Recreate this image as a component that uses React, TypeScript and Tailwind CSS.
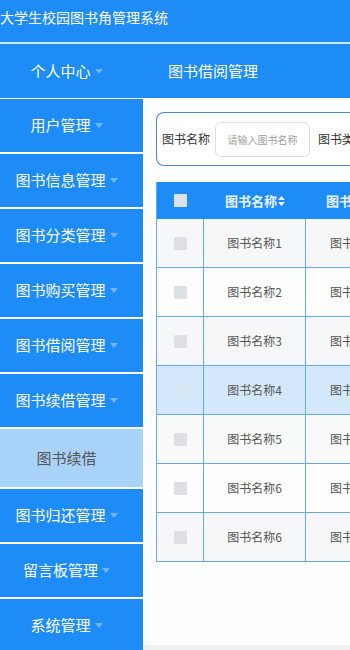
import React from 'react'

const font = { fontFamily: '"Noto Sans CJK SC", "Noto Sans", sans-serif' }

const Caret: React.FC<{ className?: string }> = ({ className }) => (
  <svg width="8" height="5" viewBox="0 0 8 5" className={className}>
    <path d="M0 0 L8 0 L4 5 Z" fill="currentColor" />
  </svg>
)

const menu = [
  '用户管理',
  '图书信息管理',
  '图书分类管理',
  '图书购买管理',
  '图书借阅管理',
  '图书续借管理',
]
const menu2 = ['图书归还管理', '留言板管理', '系统管理']

const rows = [
  { name: '图书名称1', bg: 'bg-[#f6f7f8]' },
  { name: '图书名称2', bg: 'bg-[#fdfdfd]' },
  { name: '图书名称3', bg: 'bg-[#f6f7f8]' },
  { name: '图书名称4', bg: 'bg-[#d3e8fb]', active: true },
  { name: '图书名称5', bg: 'bg-[#f8f9f9]' },
  { name: '图书名称6', bg: 'bg-[#fdfdfd]' },
  { name: '图书名称6', bg: 'bg-[#f6f7f8]' },
]

const MenuItem: React.FC<{ label: string }> = ({ label }) => (
  <div className="flex h-[53px] shrink-0 items-center justify-center gap-1 bg-[#1e8cf6] pr-[10px] text-[15px] text-white">
    <span>{label}</span>
    <Caret className="text-[#6fb6fb]" />
  </div>
)

const App: React.FC = () => {
  return (
    <div className="h-[650px] w-[350px] overflow-hidden bg-white" style={font}>
      <div className="h-[42px] bg-[#1e8cf6] pt-[7px] text-[14px] text-white">
        大学生校园图书角管理系统
      </div>
      <div className="h-[2px] bg-[#cfe6fd]" />
      <div className="flex h-[54px] items-center bg-[#1e8cf6] text-[15px] text-white">
        <div className="flex w-[143px] items-center justify-center gap-1 pr-[10px]">
          <span>个人中心</span>
          <Caret className="text-[#6fb6fb]" />
        </div>
        <div className="ml-[25px]">图书借阅管理</div>
      </div>
      <div className="flex h-[554px]">
        <div className="flex w-[143px] shrink-0 flex-col gap-[2px] bg-white pt-[1px]">
          {menu.map((m) => (
            <MenuItem key={m} label={m} />
          ))}
          <div className="flex h-[58px] shrink-0 items-center justify-center bg-[#a9d2f9] pr-[10px] text-[15px] text-[#555]">
            图书续借
          </div>
          {menu2.map((m) => (
            <MenuItem key={m} label={m} />
          ))}
        </div>
        <div className="flex min-w-0 flex-1 flex-col bg-[#fcfdfd]">
          <div className="flex-1 overflow-hidden pl-[13px] pt-[14px]">
            <div className="flex h-[54px] w-[300px] items-center rounded-l-[8px] border-[1.5px] border-r-0 border-[#4f86c6] bg-white pl-[5px] text-[12px] text-[#333]">
              <span>图书名称</span>
              <div className="ml-[5px] flex h-[35px] w-[95px] shrink-0 items-center justify-center rounded-[6px] border border-[#dcdfe6] text-[10px] text-[#a0a0a0]">
                请输入图书名称
              </div>
              <span className="ml-[8px] whitespace-nowrap">图书类型</span>
            </div>
            <div className="mt-[16px] w-[300px] border-l border-[#6aa8e3]">
              <div className="flex h-[37px] bg-[#1e8cf6] text-[13px] font-bold text-[#e8f3ff]">
                <div className="flex w-[47px] shrink-0 items-center justify-center">
                  <div className="h-[13px] w-[13px] rounded-[1px] bg-[#dde3ea]" />
                </div>
                <div className="flex w-[102px] shrink-0 items-center justify-center gap-[1px]">
                  图书名称
                  <svg width="7" height="10" viewBox="0 0 7 10">
                    <path d="M3.5 0 L7 4 L0 4 Z M0 6 L7 6 L3.5 10 Z" fill="currentColor" />
                  </svg>
                </div>
                <div className="flex flex-1 items-center pl-[20px] whitespace-nowrap">图书类型</div>
              </div>
              {rows.map((r, i) => (
                <div key={i} className={`flex h-[49px] border-b border-[#6aa8e3] text-[12px] text-[#555] ${r.bg}`}>
                  <div className="flex w-[47px] shrink-0 items-center justify-center border-r border-[#6aa8e3]">
                    <div className={`h-[13px] w-[13px] rounded-[1px] ${r.active ? 'bg-[#d9e6f3]' : 'bg-[#dcdfe4]'}`} />
                  </div>
                  <div className="flex w-[102px] shrink-0 items-center justify-center border-r border-[#6aa8e3]">
                    {r.name}
                  </div>
                  <div className="flex flex-1 items-center pl-[24px] whitespace-nowrap">图书类型</div>
                </div>
              ))}
            </div>
          </div>
          <div className="h-[7px] bg-[#eef2f2]" />
        </div>
      </div>
    </div>
  )
}

export default App
